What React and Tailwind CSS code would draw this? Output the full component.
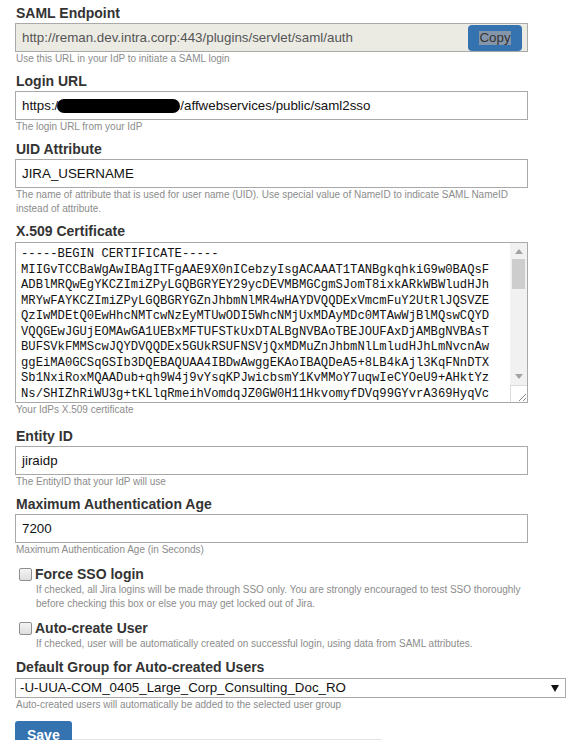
import React from "react";

const certLines = [
  "-----BEGIN CERTIFICATE-----",
  "MIIGvTCCBaWgAwIBAgITFgAAE9X0nICebzyIsgACAAAT1TANBgkqhkiG9w0BAQsF",
  "ADBlMRQwEgYKCZImiZPyLGQBGRYEY29ycDEVMBMGCgmSJomT8ixkARkWBWludHJh",
  "MRYwFAYKCZImiZPyLGQBGRYGZnJhbmNlMR4wHAYDVQQDExVmcmFuY2UtRlJQSVZE",
  "QzIwMDEtQ0EwHhcNMTcwNzEyMTUwODI5WhcNMjUxMDAyMDc0MTAwWjBlMQswCQYD",
  "VQQGEwJGUjEOMAwGA1UEBxMFTUFSTkUxDTALBgNVBAoTBEJOUFAxDjAMBgNVBAsT",
  "BUFSVkFMMScwJQYDVQQDEx5GUkRSUFNSVjQxMDMuZnJhbmNlLmludHJhLmNvcnAw",
  "ggEiMA0GCSqGSIb3DQEBAQUAA4IBDwAwggEKAoIBAQDeA5+8LB4kAjl3KqFNnDTX",
  "Sb1NxiRoxMQAADub+qh9W4j9vYsqKPJwicbsmY1KvMMoY7uqwIeCYOeU9+AHktYz",
  "Ns/SHIZhRiWU3g+tKLlqRmeihVomdqJZ0GW0H11HkvomyfDVq99GYvrA369HyqVc",
  "Ai3r9vGXOCpoQ8Pib3QWEu0XGrGmuq4UIgtMopZWkdIGqrAlgPJmsv2VQ6oGPPbT",
];

function Label({ children }) {
  return (
    <div className="h-[18px] leading-[18px] text-[14px] font-bold text-[#333] pl-px whitespace-nowrap">
      {children}
    </div>
  );
}

function Hint({ children }) {
  return (
    <div className="text-[10px] leading-[14px] text-[#8c8c8c] pl-px whitespace-nowrap">
      {children}
    </div>
  );
}

function TextInput({ children }) {
  return (
    <div className="mt-px w-[513px] h-[29px] border border-[#a9a9a9] bg-white flex items-center pl-[6px] text-[13.33px] text-[#111] whitespace-nowrap">
      {children}
    </div>
  );
}

function Checkbox() {
  return (
    <div className="w-[13px] h-[13px] rounded-[2px] border border-[#8f8f8f] bg-gradient-to-b from-[#f4f4f4] to-[#dedede]" />
  );
}

export default function App() {
  return (
    <div className="bg-white min-h-[740px] pl-[15px] pt-[4px] font-['Liberation_Sans',Arial,sans-serif] text-[#333]">
      {/* SAML Endpoint */}
      <Label>SAML Endpoint</Label>
      <div className="mt-px w-[513px] h-[29px] border border-[#a9a9a9] bg-[#ebebe4] flex items-center justify-between pl-[6px] pr-[5px]">
        <span className="text-[13.33px] text-[#555] whitespace-nowrap">
          http://reman.dev.intra.corp:443/plugins/servlet/saml/auth
        </span>
        <div className="w-[54px] h-[26px] rounded-[4px] bg-[#3572b0] flex items-center justify-center">
          <span className="text-[13.33px] leading-[14px] text-[#333] bg-[#8596ab]">Copy</span>
        </div>
      </div>
      <Hint>Use this URL in your IdP to initiate a SAML login</Hint>

      {/* Login URL */}
      <div className="mt-[6px]">
        <Label>Login URL</Label>
        <TextInput>
          <span>https:/</span>
          <span className="inline-block w-[123px] h-[14px] rounded-full bg-black -ml-[1px]" />
          <span>/affwebservices/public/saml2sso</span>
        </TextInput>
        <Hint>The login URL from your IdP</Hint>
      </div>

      {/* UID Attribute */}
      <div className="mt-[6px]">
        <Label>UID Attribute</Label>
        <TextInput>JIRA_USERNAME</TextInput>
        <Hint>
          The name of attribute that is used for user name (UID). Use special value of NameID to indicate SAML NameID
        </Hint>
        <Hint>instead of attribute.</Hint>
      </div>

      {/* X.509 */}
      <div className="mt-[6px]">
        <Label>X.509 Certificate</Label>
        <div className="mt-[2px] w-[513px] h-[161px] border border-[#a9a9a9] bg-white flex overflow-hidden">
          <div className="flex-1 pl-[5px] pt-[4px] overflow-hidden font-['Liberation_Mono',monospace] text-[12.2px] leading-[15.5px] text-[#111] whitespace-pre">
            {certLines.map((l, i) => (
              <div key={i}>{l}</div>
            ))}
          </div>
          <div className="w-[17px] flex flex-col bg-[#f1f1f1]">
            <div className="h-[16px] flex items-center justify-center">
              <svg width="8" height="5" viewBox="0 0 8 5">
                <polygon points="0,5 8,5 4,0" fill="#a3a3a3" />
              </svg>
            </div>
            <div className="h-[30px] mx-[2px] bg-[#cdcdcd]" />
            <div className="flex-1" />
            <div className="h-[17px] flex items-center justify-center">
              <svg width="8" height="5" viewBox="0 0 8 5">
                <polygon points="0,0 8,0 4,5" fill="#a3a3a3" />
              </svg>
            </div>
            <div className="h-[17px] bg-white border-t border-l border-[#dcdcdc] flex items-end justify-end">
              <svg width="10" height="10" viewBox="0 0 10 10">
                <line x1="9" y1="2" x2="2" y2="9" stroke="#8a8a8a" strokeWidth="1" />
                <line x1="9" y1="6" x2="6" y2="9" stroke="#8a8a8a" strokeWidth="1" />
              </svg>
            </div>
          </div>
        </div>
        <Hint>Your IdPs X.509 certificate</Hint>
      </div>

      {/* Entity ID */}
      <div className="mt-[10px]">
        <Label>Entity ID</Label>
        <TextInput>jiraidp</TextInput>
        <Hint>The EntityID that your IdP will use</Hint>
      </div>

      {/* Max Auth Age */}
      <div className="mt-[6px]">
        <Label>Maximum Authentication Age</Label>
        <TextInput>7200</TextInput>
        <Hint>Maximum Authentication Age (in Seconds)</Hint>
      </div>

      {/* Force SSO */}
      <div className="mt-[8px]">
        <div className="flex items-center h-[18px] pl-[4px] gap-[3px]">
          <Checkbox />
          <span className="text-[14px] font-bold text-[#333] leading-[18px]">Force SSO login</span>
        </div>
        <div className="pl-[20px]">
          <Hint>
            If checked, all Jira logins will be made through SSO only. You are strongly encouraged to test SSO thoroughly
          </Hint>
          <Hint>before checking this box or else you may get locked out of Jira.</Hint>
        </div>
      </div>

      {/* Auto-create */}
      <div className="mt-[8px]">
        <div className="flex items-center h-[18px] pl-[4px] gap-[3px]">
          <Checkbox />
          <span className="text-[14px] font-bold text-[#333] leading-[18px]">Auto-create User</span>
        </div>
        <div className="pl-[20px]">
          <Hint>
            If checked, user will be automatically created on successful login, using data from SAML attributes.
          </Hint>
        </div>
      </div>

      {/* Default Group */}
      <div className="mt-[7px]">
        <Label>Default Group for Auto-created Users</Label>
        <div className="mt-[2px] w-[551px] h-[20px] border border-[#a9a9a9] bg-white flex items-center justify-between pl-[4px] pr-[6px]">
          <span className="text-[13.33px] text-[#111] whitespace-nowrap">
            -U-UUA-COM_0405_Large_Corp_Consulting_Doc_RO
          </span>
          <svg width="8" height="7" viewBox="0 0 8 7">
            <polygon points="0,0 8,0 4,7" fill="#111" />
          </svg>
        </div>
        <Hint>Auto-created users will automatically be added to the selected user group</Hint>
      </div>

      {/* Save */}
      <div className="mt-[9px] flex items-start">
        <button className="h-[28px] px-[12px] rounded-[3px] bg-[#3572b0] text-white text-[14px] font-bold leading-[28px]">
          Save
        </button>
        <div className="mt-[18px] h-px w-[310px] bg-[#e3e3e3]" />
      </div>
    </div>
  );
}
